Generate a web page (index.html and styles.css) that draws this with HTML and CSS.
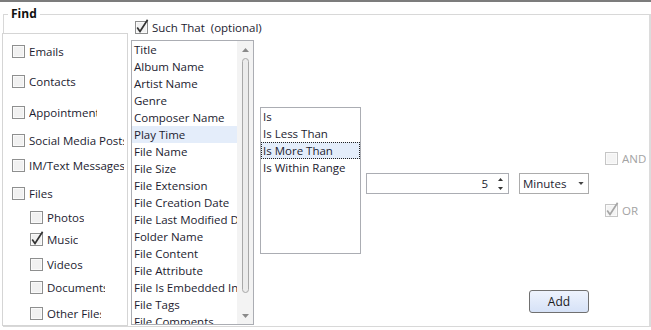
FILE: index.html
```html
<!DOCTYPE html>
<html lang="en">
<head>
  <meta charset="UTF-8">
  <meta name="viewport" content="width=device-width, initial-scale=1.0">
  <title>Find</title>
  <link rel="stylesheet" href="styles.css">
</head>
<body>
  <div class="find">
    <span class="legend">Find</span>

    <div class="types">
      <div class="check row-emails"><span class="box"></span><span class="text">Emails</span></div>
      <div class="check row-contacts"><span class="box"></span><span class="text">Contacts</span></div>
      <div class="check row-appts"><span class="box"></span><span class="text clip-appts">Appointments</span></div>
      <div class="check row-social"><span class="box"></span><span class="text clip-wide">Social Media Posts</span></div>
      <div class="check row-im"><span class="box"></span><span class="text clip-wide">IM/Text Messages</span></div>
      <div class="check row-files"><span class="box"></span><span class="text">Files</span></div>
      <div class="check sub row-photos"><span class="box"></span><span class="text">Photos</span></div>
      <div class="check sub row-music">
        <span class="box"><svg viewBox="0 0 13 13"><path d="M2.2 6.6 L5 10.4 L12.6 -1.2"/></svg></span>
        <span class="text">Music</span>
      </div>
      <div class="check sub row-videos"><span class="box"></span><span class="text">Videos</span></div>
      <div class="check sub row-docs"><span class="box"></span><span class="text clip-docs">Documents</span></div>
      <div class="check sub row-other"><span class="box"></span><span class="text clip-other">Other Files</span></div>
    </div>

    <div class="fields-col">
      <div class="check such">
        <span class="box"><svg viewBox="0 0 13 13"><path d="M2.2 6.6 L5 10.4 L12.6 -1.2"/></svg></span>
        <span class="text">Such That&nbsp; (optional)</span>
      </div>
      <div class="listbox fields">
        <ul class="items">
          <li>Title</li>
          <li>Album Name</li>
          <li>Artist Name</li>
          <li>Genre</li>
          <li>Composer Name</li>
          <li class="selected">Play Time</li>
          <li>File Name</li>
          <li>File Size</li>
          <li>File Extension</li>
          <li>File Creation Date</li>
          <li>File Last Modified Date</li>
          <li>Folder Name</li>
          <li>File Content</li>
          <li>File Attribute</li>
          <li>File Is Embedded In</li>
          <li>File Tags</li>
          <li>File Comments</li>
        </ul>
        <div class="scrollbar">
          <div class="arrow"><svg viewBox="0 0 7 4"><path d="M0 4 L3.5 0 L7 4 Z"/></svg></div>
          <div class="track"><div class="thumb"></div></div>
          <div class="arrow"><svg viewBox="0 0 7 4"><path d="M0 0 L7 0 L3.5 4 Z"/></svg></div>
        </div>
      </div>
    </div>

    <div class="listbox operators">
      <ul class="items">
        <li>Is</li>
        <li>Is Less Than</li>
        <li class="selected focused">Is More Than</li>
        <li>Is Within Range</li>
      </ul>
    </div>

    <div class="value-col">
      <div class="value-row">
        <div class="spin">
          <span class="num">5</span>
          <span class="spinner">
            <svg viewBox="0 0 5 3"><path d="M0 3 L2.5 0 L5 3 Z"/></svg>
            <svg viewBox="0 0 5 3"><path d="M0 0 L5 0 L2.5 3 Z"/></svg>
          </span>
        </div>
        <div class="combo">
          <span>Minutes</span>
          <svg viewBox="0 0 7 4"><path d="M0 0 L7 0 L3.5 4 Z"/></svg>
        </div>
      </div>
      <button class="add">Add</button>
    </div>

    <div class="joins">
      <div class="check disabled and"><span class="box"></span><span class="text">AND</span></div>
      <div class="check disabled or">
        <span class="box"><svg viewBox="0 0 13 13"><path d="M2.2 6.6 L5 10.4 L12.6 -1.2"/></svg></span>
        <span class="text">OR</span>
      </div>
    </div>
  </div>
</body>
</html>
```

FILE: styles.css
```css
* {
  box-sizing: border-box;
}

body {
  margin: 0;
  width: 651px;
  height: 330px;
  overflow: hidden;
  background-color: #fff;
  border-top: 2px solid #7c7c7c;
  color: #1c1c30;
  font-family: "Open Sans", "Noto Sans", Arial, sans-serif;
  font-size: 11.5px;
}

.find {
  position: relative;
  display: flex;
  align-items: flex-start;
  margin: 12px 0 0 3px;
  width: 648px;
  height: 313px;
  border: 1px solid #d8d8d8;
  border-right: 2px solid #dcdcdc;
}

.legend {
  position: absolute;
  top: -9px;
  left: 4px;
  padding: 0 3px;
  background-color: #fff;
  font-weight: bold;
  font-size: 12px;
  line-height: 16px;
  color: #111;
}

/* checkboxes */

.check {
  display: flex;
  align-items: center;
  height: 13px;
  white-space: nowrap;
}

.box {
  position: relative;
  flex: none;
  width: 13px;
  height: 13px;
  border: 1px solid #8e8f8f;
  background-color: #f1f1f1;
  box-shadow: inset 0 0 0 1px #fafafa;
}

.box svg {
  position: absolute;
  left: -1px;
  top: -1px;
  width: 13px;
  height: 13px;
  overflow: visible;
}

.box path {
  fill: none;
  stroke: #333;
  stroke-width: 1.7;
}

.check .text {
  margin-left: 4px;
  line-height: 16px;
  overflow: hidden;
}

.check.disabled .box {
  border-color: #c6c6c6;
  background-color: #f4f4f4;
}

.check.disabled .box path {
  stroke: #a6a6a6;
}

.check.disabled .text {
  color: #a3a3a3;
}

/* left panel */

.types {
  flex: none;
  display: flex;
  flex-direction: column;
  margin: 18px 0 0 -2px;
  padding-left: 9px;
  width: 126px;
  height: 293px;
  border: 1px solid #d5d5d5;
  background-color: #fff;
}

.types .sub {
  padding-left: 18px;
}

.row-emails { margin-top: 11px; }
.row-contacts { margin-top: 17px; }
.row-appts { margin-top: 18px; }
.row-social { margin-top: 15px; }
.row-im { margin-top: 12px; }
.row-files { margin-top: 15px; }
.row-photos { margin-top: 11px; }
.row-music { margin-top: 9px; }
.row-videos { margin-top: 12px; }
.row-docs { margin-top: 10px; }
.row-other { margin-top: 13px; }

.clip-appts { width: 68px; }
.clip-wide { width: 95px; }
.clip-docs { width: 58px; }
.clip-other { width: 54px; }

/* lists */

.fields-col {
  flex: none;
  width: 123px;
  margin: 6px 0 0 3px;
}

.such {
  padding-left: 4px;
  margin-bottom: 6px;
}

.such .text {
  flex: none;
  overflow: visible;
}

.listbox {
  display: flex;
  border: 1px solid #abadb3;
  background-color: #fff;
  overflow: hidden;
}

.items {
  flex: 1;
  margin: 0;
  padding: 0;
  list-style: none;
  overflow: hidden;
}

.items li {
  height: 17px;
  padding-left: 2px;
  line-height: 17px;
  white-space: nowrap;
  overflow: hidden;
}

.items li.selected {
  background-color: #e4edfa;
}

.items li.focused {
  border: 1px dotted #222;
  padding-left: 1px;
  line-height: 15px;
}

.fields {
  width: 123px;
  height: 285px;
}

.scrollbar {
  flex: none;
  display: flex;
  flex-direction: column;
  width: 16px;
  background-color: #f3f3f3;
}

.scrollbar .arrow {
  display: flex;
  align-items: center;
  justify-content: center;
  height: 17px;
}

.scrollbar .arrow svg {
  width: 7px;
  height: 4px;
  fill: #8a8a8a;
}

.track {
  flex: 1;
}

.thumb {
  margin-left: 5px;
  width: 7px;
  height: 235px;
  border: 1px solid #a8a8a8;
  border-radius: 4px;
  background-color: #ececec;
}

.operators {
  flex: none;
  margin: 92px 0 0 6px;
  width: 101px;
  height: 147px;
}

/* value inputs */

.value-col {
  flex: none;
  display: flex;
  flex-direction: column;
  margin: 158px 0 0 5px;
}

.value-row {
  display: flex;
}

.spin {
  display: flex;
  align-items: center;
  justify-content: flex-end;
  width: 143px;
  height: 21px;
  border: 1px solid #abadb3;
}

.spin .num {
  margin-right: 5px;
}

.spinner {
  display: flex;
  flex-direction: column;
  gap: 6px;
  width: 14px;
  margin-right: 1px;
  align-items: center;
}

.spinner svg {
  width: 5px;
  height: 3px;
  fill: #333;
}

.combo {
  display: flex;
  align-items: center;
  justify-content: space-between;
  margin-left: 10px;
  padding: 0 4px 0 3px;
  width: 70px;
  height: 21px;
  border: 1px solid #acacac;
  background-color: #fff;
}

.combo svg {
  width: 6px;
  height: 3px;
  fill: #444;
}

.add {
  align-self: flex-end;
  margin-top: 96px;
  width: 60px;
  height: 23px;
  padding: 0;
  border: 1px solid #707070;
  border-radius: 3px;
  background: linear-gradient(#eef3fd, #d6e2f7);
  color: #1a1a1a;
  font-family: inherit;
  font-size: 12px;
}

.joins {
  flex: none;
  margin: 137px 0 0 16px;
}

.joins .or {
  margin-top: 39px;
}
```
